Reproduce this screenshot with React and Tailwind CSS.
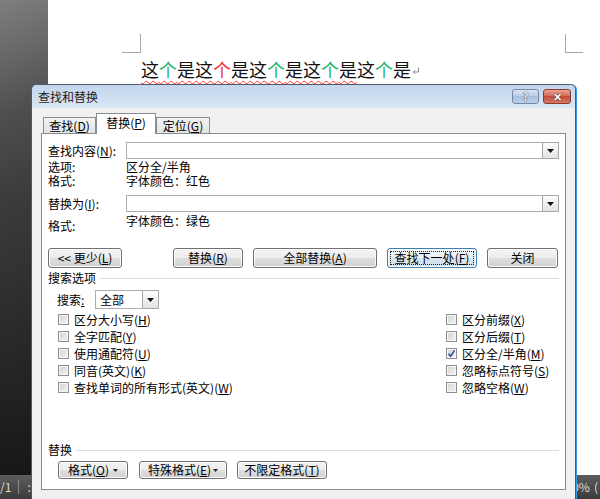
import React from "react";

// Find & Replace dialog over a Word document page

function Acc({ k }) {
  return (
    <span>
      (<span className="underline underline-offset-[1px]">{k}</span>)
    </span>
  );
}

function Arrow({ className = "" }) {
  return (
    <div
      className={`flex items-center justify-center border border-[#a7a7a7] bg-[linear-gradient(#fdfdfd,#e3e3e3)] ${className}`}
    >
      <svg width="7" height="4" viewBox="0 0 7 4">
        <path d="M0 0h7L3.5 4z" fill="#111" />
      </svg>
    </div>
  );
}

function Btn({ className = "", focused, children }) {
  return (
    <div
      className={`flex items-center justify-center rounded-[3px] border shadow-[inset_0_0_0_1px_#fbfbfb] ${
        focused
          ? "border-[#3c7fb1] bg-[linear-gradient(#f3f8fb,#e8f0f6_50%,#d9e6ef_50%,#cfdfea)]"
          : "border-[#707070] bg-[linear-gradient(#f4f4f4,#ececec_50%,#dedede_50%,#d2d2d2)]"
      } ${className}`}
    >
      {focused ? (
        <div className="flex h-[14px] w-[84px] items-center justify-center border border-dotted border-[#222]">
          {children}
        </div>
      ) : (
        children
      )}
    </div>
  );
}

function Check({ checked, children }) {
  return (
    <div className="flex h-[17px] items-center">
      <div className="mr-[5px] flex h-[11px] w-[11px] items-center justify-center border border-[#8f8f8f] bg-[linear-gradient(135deg,#d4d4d4,#f3f3f3)] shadow-[inset_0_0_0_1px_#f6f6f6]">
        {checked && (
          <svg width="9" height="9" viewBox="0 0 9 9">
            <path d="M1.5 4.8L3.6 7.2L7.6 1.4" stroke="#2b4f9e" strokeWidth="1.6" fill="none" />
          </svg>
        )}
      </div>
      <span>{children}</span>
    </div>
  );
}

function Field() {
  return (
    <div className="flex h-[17px] flex-1 justify-end border border-[#abadb3] bg-white">
      <Arrow className="-my-px -mr-px w-[17px]" />
    </div>
  );
}

function Tab({ active, className = "", children }) {
  return (
    <div
      className={`flex items-center justify-center border-x border-t border-[#898c95] ${
        active
          ? "relative z-10 -mb-px h-[21px] bg-white pb-[2px]"
          : "h-[16px] bg-[linear-gradient(#f3f3f3,#e3e3e3)]"
      } ${className}`}
    >
      {children}
    </div>
  );
}

export default function App() {
  const green = "text-[#27b56a]";
  const red = "text-[#f03438]";

  return (
    <div className="relative flex h-[499px] w-[600px] flex-col overflow-hidden bg-white font-['Noto_Sans_CJK_SC','Noto_Sans',sans-serif] text-[12px] leading-[14px] text-black">
      {/* document area */}
      <div className="flex flex-1">
        <div className="w-[48px] bg-[linear-gradient(160deg,#7e7e7e_0%,#676767_12%,#4e4e4e_24%,#3b3b3b_42%,#161616_100%)]" />
        <div className="flex flex-1 flex-col bg-white">
          <div className="mt-[34px] flex">
            <div className="ml-[74px] h-[19px] w-[19px] border-b border-r border-[#a8a8a8]" />
            <div className="ml-auto mr-[17px] h-[19px] w-[18px] border-b border-l border-[#a8a8a8]" />
          </div>
          <div className="ml-[93px] mt-[4px] flex items-center text-[18px] leading-[24px] text-[#111]">
            <span className="underline decoration-[#ff3030] decoration-wavy decoration-1 underline-offset-[3px]">
              这<span className={green}>个</span>是这<span className={red}>个</span>是这
              <span className={green}>个</span>是这<span className={green}>个</span>是
            </span>
            <span>
              这<span className={green}>个</span>是
            </span>
            <svg className="ml-[1px] mt-[4px]" width="8" height="8" viewBox="0 0 8 8">
              <path d="M6.5 0.5v4.5H1.5M3.2 3.2L1.3 5l1.9 1.8" stroke="#8c8c8c" strokeWidth="1" fill="none" />
            </svg>
          </div>
        </div>
      </div>

      {/* status bar */}
      <div className="flex h-[24px] items-center bg-[linear-gradient(#5d5d5d,#3b3b3b)] text-[12px] text-[#dcdcdc]">
        <span>/1</span>
        <div className="ml-[7px] h-[14px] w-px bg-[#8a8a8a]" />
        <span className="ml-[8px]">:</span>
        <div className="ml-auto mr-[2px] flex whitespace-nowrap">
          <span>100%</span>
          <span className="ml-[4px]">(</span>
        </div>
      </div>

      {/* dialog window */}
      <div className="absolute left-[31px] top-[84px] flex h-[430px] w-[545px] flex-col overflow-hidden rounded-t-[6px] border border-[#4f5a68] bg-[#f0f0f0] shadow-[1px_0_0_#2f9de6]">
        <div className="flex h-[23px] items-center bg-[linear-gradient(#c3d6ed,#d9e6f4)] pl-[6px] pr-[4px]">
          <span className="text-[12px] text-[#1b1b1b]">查找和替换</span>
          <div className="ml-auto flex gap-[4px]">
            <div className="flex h-[15px] w-[27px] items-center justify-center rounded-[3px] border border-[#7088a6] bg-[linear-gradient(#dae5f2,#b9cce3_50%,#a9c0dc_50%,#bdd0e6)] text-[11px] font-bold leading-none text-[#f4f4f4] [text-shadow:0_0_1px_#334,0_0_1px_#334]">
              ?
            </div>
            <div className="flex h-[15px] w-[28px] items-center justify-center rounded-[3px] border border-[#8c3a2c] bg-[linear-gradient(#e9a291,#d0685a_50%,#c04d3d_50%,#d37c68)] text-[11px] font-bold leading-none text-white [text-shadow:0_0_1px_#400,0_0_1px_#400]">
              ✕
            </div>
          </div>
        </div>

        <div className="flex flex-col px-[9px] pt-[5px]">
          <div className="flex h-[20px] items-end pl-[2px]">
            <Tab className="w-[53px]">
              查找<Acc k="D" />
            </Tab>
            <Tab active className="w-[60px]">
              替换<Acc k="P" />
            </Tab>
            <Tab className="w-[54px]">
              定位<Acc k="G" />
            </Tab>
          </div>

          <div className="flex h-[357px] flex-col border border-[#898c95] bg-white px-[6px] pt-[8px]">
            <div className="flex h-[17px] items-center">
              <span className="w-[78px]">
                查找内容<Acc k="N" />:
              </span>
              <Field />
            </div>
            <div className="mt-px flex h-[14px] items-center">
              <span className="w-[78px]">选项:</span>
              <span>区分全/半角</span>
            </div>
            <div className="flex h-[14px] items-center">
              <span className="w-[78px]">格式:</span>
              <span>字体颜色：红色</span>
            </div>
            <div className="mt-[7px] flex h-[17px] items-center">
              <span className="w-[78px]">
                替换为<Acc k="I" />:
              </span>
              <Field />
            </div>
            <div className="mt-[2px] flex">
              <span className="w-[78px] pt-[5px]">格式:</span>
              <span>字体颜色：绿色</span>
            </div>

            <div className="mt-[15px] flex h-[20px]">
              <Btn className="w-[74px]">
                &lt;&lt; 更少<Acc k="L" />
              </Btn>
              <Btn className="ml-[51px] w-[70px]">
                替换<Acc k="R" />
              </Btn>
              <Btn className="ml-[10px] w-[124px]">
                全部替换<Acc k="A" />
              </Btn>
              <Btn focused className="ml-[10px] w-[90px]">
                查找下一处<Acc k="F" />
              </Btn>
              <Btn className="ml-[10px] w-[71px]">关闭</Btn>
            </div>

            <div className="mt-[3px] flex h-[14px] items-center gap-[4px]">
              <span>搜索选项</span>
              <div className="h-px flex-1 bg-[#d5dfe6]" />
            </div>

            <div className="mt-[5px] flex h-[19px] items-center pl-[9px]">
              <span className="w-[38px]">
                搜索<span className="underline">:</span>
              </span>
              <div className="flex h-[19px] w-[64px] items-center border border-[#abadb3] bg-white">
                <span className="pl-[4px]">全部</span>
                <Arrow className="-my-px -mr-px ml-auto h-[19px] w-[17px]" />
              </div>
            </div>

            <div className="mt-[2px] flex pl-[10px]">
              <div className="flex w-[388px] flex-col">
                <Check>区分大小写<Acc k="H" /></Check>
                <Check>全字匹配<Acc k="Y" /></Check>
                <Check>使用通配符<Acc k="U" /></Check>
                <Check>同音(英文)<Acc k="K" /></Check>
                <Check>查找单词的所有形式(英文)<Acc k="W" /></Check>
              </div>
              <div className="flex flex-col">
                <Check>区分前缀<Acc k="X" /></Check>
                <Check>区分后缀<Acc k="T" /></Check>
                <Check checked>区分全/半角<Acc k="M" /></Check>
                <Check>忽略标点符号<Acc k="S" /></Check>
                <Check>忽略空格<Acc k="W" /></Check>
              </div>
            </div>

            <div className="mt-[47px] flex h-[14px] items-center gap-[4px]">
              <span>替换</span>
              <div className="h-px flex-1 bg-[#d5dfe6]" />
            </div>

            <div className="mt-[4px] flex h-[18px] pl-[10px]">
              <Btn className="w-[70px] gap-[4px]">
                <span>格式<Acc k="O" /></span>
                <svg width="5" height="3" viewBox="0 0 5 3"><path d="M0 0h5L2.5 3z" fill="#222" /></svg>
              </Btn>
              <Btn className="ml-[11px] w-[88px] gap-[2px]">
                <span>特殊格式<Acc k="E" /></span>
                <svg width="5" height="3" viewBox="0 0 5 3"><path d="M0 0h5L2.5 3z" fill="#222" /></svg>
              </Btn>
              <Btn className="ml-[10px] w-[90px]">
                不限定格式<Acc k="T" />
              </Btn>
            </div>
          </div>
        </div>
      </div>
    </div>
  );
}
